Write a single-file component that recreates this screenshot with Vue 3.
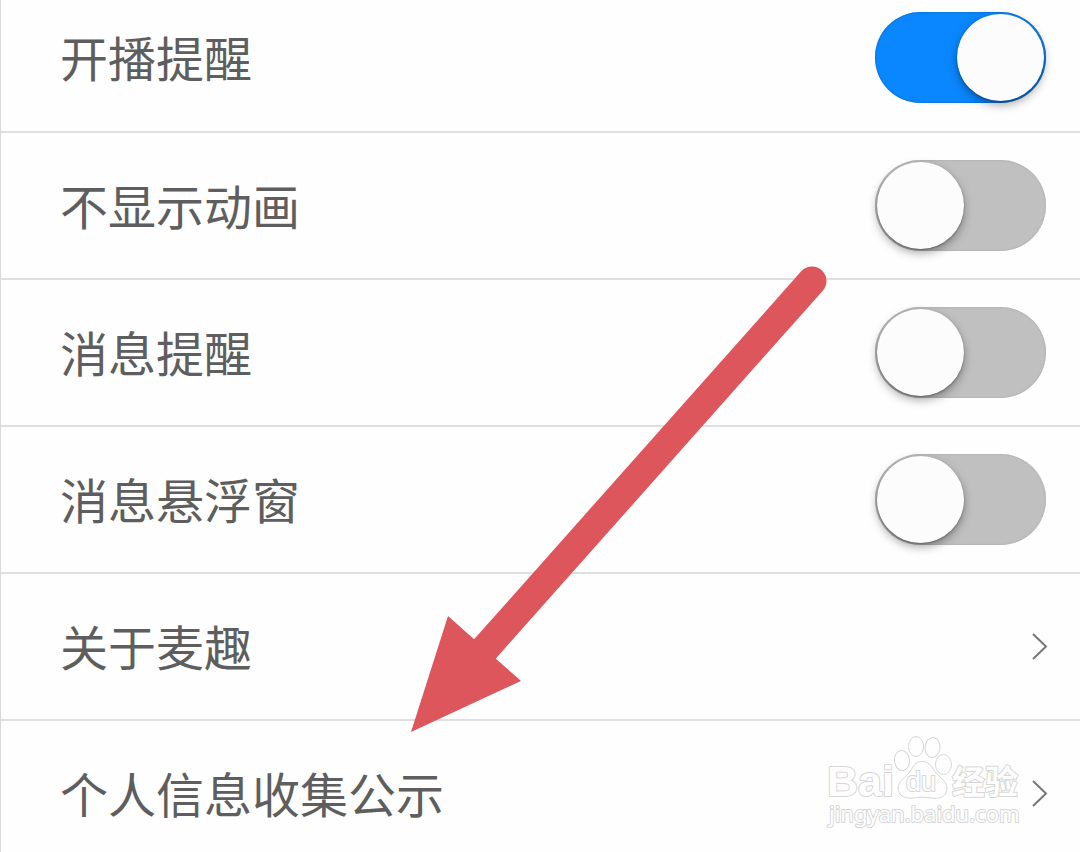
<script setup>
import { reactive } from 'vue'

const toggles = reactive([
  { id: 'live', label: '开播提醒', on: true },
  { id: 'animation', label: '不显示动画', on: false },
  { id: 'message', label: '消息提醒', on: false },
  { id: 'floating', label: '消息悬浮窗', on: false }
])

const links = [
  { id: 'about', label: '关于麦趣' },
  { id: 'privacy', label: '个人信息收集公示' }
]
</script>

<template>
  <main class="settings">
    <ul class="list">
      <li v-for="item in toggles" :key="item.id" class="item">
        <label class="row" :for="item.id">
          <span class="text">{{ item.label }}</span>
          <input :id="item.id" v-model="item.on" class="switch" type="checkbox" role="switch" />
        </label>
      </li>
      <li v-for="link in links" :key="link.id" class="item">
        <a class="row" :href="'#' + link.id">
          <span class="text">{{ link.label }}</span>
          <svg class="chevron" width="16" height="30" viewBox="0 0 16 30" aria-hidden="true">
            <path d="M1 2 L14 14.5 L1 27" />
          </svg>
        </a>
      </li>
    </ul>

    <svg class="arrow" width="420" height="470" viewBox="0 0 420 470" aria-hidden="true">
      <path class="shaft" d="M404 17 L76 386" />
      <path class="head" d="M40 352 L113 417 L3 468 Z" />
    </svg>

    <svg class="watermark" width="204" height="100" viewBox="0 0 204 100" role="img" aria-label="Baidu 经验">
      <text class="bai" x="5" y="60">Bai</text>
      <ellipse cx="80" cy="24.5" rx="7.5" ry="10" transform="rotate(-6 80 24.5)" />
      <ellipse cx="94" cy="10.5" rx="7.5" ry="10" />
      <ellipse cx="110.5" cy="11.5" rx="7.5" ry="10" transform="rotate(6 110.5 11.5)" />
      <ellipse cx="121.5" cy="28.5" rx="8" ry="10" />
      <path d="M100 25.5 C109 25.5 110 33 115 38 C121 44 125 47 125 53 C124 62 116 63 109 62 C103 61 97 61 91 62 C83 63 77 60 76 53 C76 46 81 43 86 38 C91 33 91 25.5 100 25.5 Z" />
      <text class="du" x="84" y="55">du</text>
      <text class="cn" x="130" y="58">经验</text>
      <text class="site" x="7" y="86">jingyan.baidu.com</text>
    </svg>
  </main>
</template>

<style>
body {
  background: #fefefe;
}
</style>

<style scoped>
.settings {
  position: relative;
  box-sizing: border-box;
  min-height: 100vh;
  overflow: hidden;
  border-left: 1px solid #d8d8d8;
  background: #fefefe;
  color: #5e5e5e;
  font-family: "Noto Sans CJK SC", sans-serif;
}

.list {
  margin: 0;
  padding: 0;
  list-style: none;
}

.item {
  border-bottom: 2px solid #dfdfdf;
}

.item:first-child .row {
  min-height: 131px;
  padding-bottom: 16px;
}

.item:last-child {
  border-bottom: 0;
}

.item:last-child .row {
  min-height: 131px;
  padding-top: 14px;
}

.row {
  display: flex;
  align-items: center;
  justify-content: space-between;
  box-sizing: border-box;
  min-height: 145px;
  padding: 0 34px 0 59px;
  color: inherit;
  text-decoration: none;
  cursor: pointer;
}

.text {
  padding-bottom: 4px;
  font-size: 48px;
  line-height: 72px;
}

.switch {
  appearance: none;
  flex: none;
  box-sizing: border-box;
  width: 171px;
  height: 91px;
  margin: 0;
  padding: 2px;
  border-radius: 46px;
  background: #c0c0c0;
  box-shadow: inset 0 0 2px #a0a0a0;
  cursor: pointer;
}

.switch::before {
  content: "";
  display: block;
  width: 87px;
  height: 87px;
  border-radius: 50%;
  background: #fcfcfc;
  box-shadow: 0 4px 10px rgba(0, 0, 0, 0.35), 0 1px 2px rgba(0, 0, 0, 0.3);
}

.switch:checked {
  background: #0a87ff;
  box-shadow: inset 0 0 2px #07539c;
}

.switch:checked::before {
  margin-left: auto;
}

.chevron {
  flex: none;
  margin-right: -2px;
  fill: none;
  stroke: #777;
  stroke-width: 2;
}

.arrow {
  position: absolute;
  left: 407px;
  top: 264px;
  pointer-events: none;
}

.shaft {
  fill: none;
  stroke: #dc565c;
  stroke-width: 29;
  stroke-linecap: round;
}

.head {
  fill: #dc565c;
}

.watermark {
  position: absolute;
  right: 54px;
  bottom: 16px;
  overflow: visible;
  fill: #fefefe;
  stroke: #d6d6d6;
  stroke-width: 1;
  pointer-events: none;
}

.watermark text {
  paint-order: stroke;
  stroke-width: 2;
  stroke-linejoin: round;
}

.bai {
  font: bold 43px "Liberation Sans", sans-serif;
}

.du {
  font: 27px "Liberation Sans", sans-serif;
}

.cn {
  font: bold 33px "Noto Sans CJK SC", sans-serif;
}

.site {
  font: 22px "Noto Sans", sans-serif;
}
</style>
